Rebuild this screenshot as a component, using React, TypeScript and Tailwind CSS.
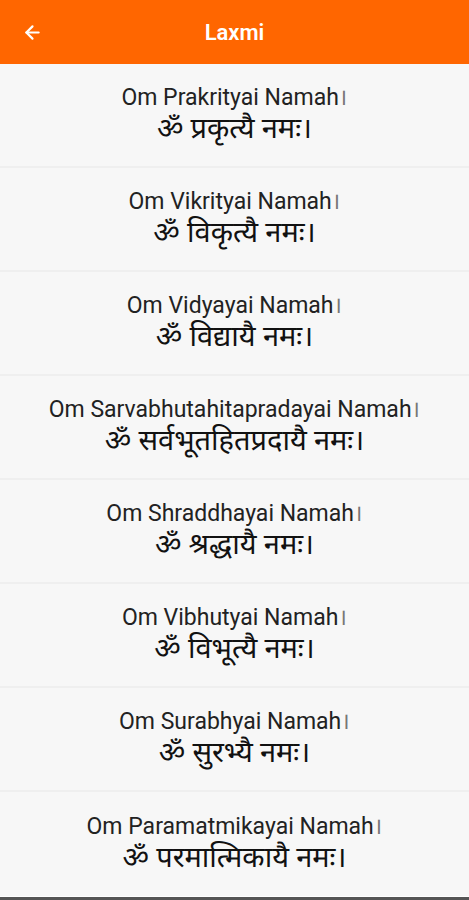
import { ArrowLeft } from 'lucide-react';

const mantras = [
  { en: 'Om Prakrityai Namah', hi: 'ॐ प्रकृत्यै नमः।' },
  { en: 'Om Vikrityai Namah', hi: 'ॐ विकृत्यै नमः।' },
  { en: 'Om Vidyayai Namah', hi: 'ॐ विद्यायै नमः।' },
  { en: 'Om Sarvabhutahitapradayai Namah', hi: 'ॐ सर्वभूतहितप्रदायै नमः।' },
  { en: 'Om Shraddhayai Namah', hi: 'ॐ श्रद्धायै नमः।' },
  { en: 'Om Vibhutyai Namah', hi: 'ॐ विभूत्यै नमः।' },
  { en: 'Om Surabhyai Namah', hi: 'ॐ सुरभ्यै नमः।' },
  { en: 'Om Paramatmikayai Namah', hi: 'ॐ परमात्मिकायै नमः।' },
];

export default function App() {
  return (
    <div className="w-[469px] h-[900px] flex flex-col bg-[#f7f7f7] overflow-hidden font-['Roboto','Noto_Sans',sans-serif]">
      {/* Toolbar */}
      <div className="h-16 shrink-0 bg-[#ff6600] flex items-center relative">
        <button className="absolute left-[22px] text-white">
          <ArrowLeft className="w-[21px] h-[21px]" strokeWidth={2.5} />
        </button>
        <h1 className="flex-1 text-center text-white text-[22px] font-semibold">Laxmi</h1>
      </div>

      {/* List */}
      <div className="flex-1 flex flex-col">
        {mantras.map((m, i) => (
          <div
            key={i}
            className={`h-[104px] shrink-0 flex flex-col items-center justify-center ${
              i < mantras.length - 1 ? 'border-b-2 border-[#efefef]' : ''
            }`}
          >
            <p className="text-[23px] leading-[26px] text-[#222]">
              {m.en}
              <span className="text-[#777]">।</span>
            </p>
            <p className="text-[29px] leading-[34px] text-[#111]">{m.hi}</p>
          </div>
        ))}
      </div>
      <div className="h-px bg-white" />
      <div className="h-[3px] bg-[#555]" />
    </div>
  );
}
